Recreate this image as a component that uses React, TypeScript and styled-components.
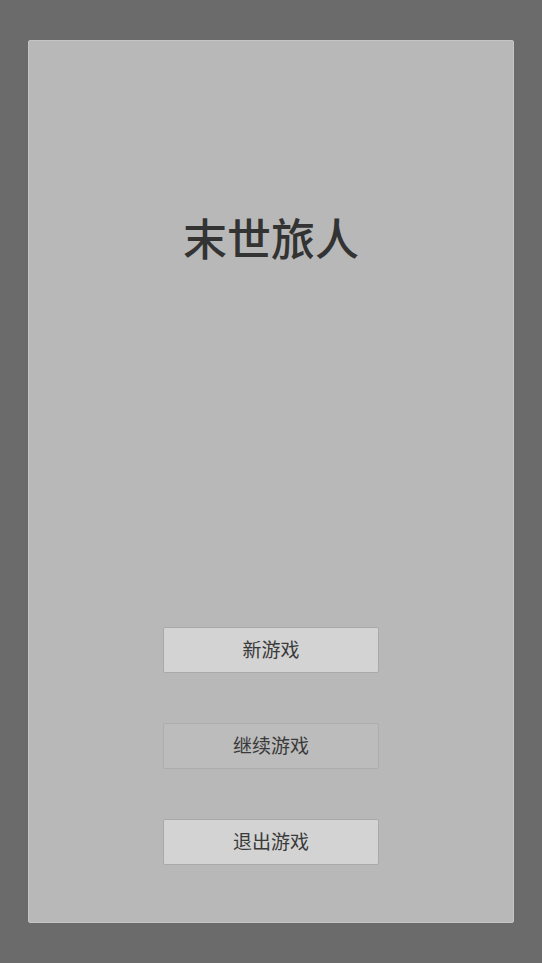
import styled, { createGlobalStyle } from "styled-components";

const GlobalStyle = createGlobalStyle`
  html, body {
    margin: 0;
    padding: 0;
    height: 100%;
    background: #6b6b6b;
  }
  #root {
    height: 100%;
  }
`;

const Screen = styled.div`
  box-sizing: border-box;
  height: 963px;
  padding: 40px 28px;
  background: #6b6b6b;
  font-family: "Noto Sans CJK SC", "Noto Sans", sans-serif;
`;

const Panel = styled.div`
  box-sizing: border-box;
  height: 100%;
  display: flex;
  flex-direction: column;
  align-items: center;
  background: #b8b8b8;
  border: 1px solid #c4c4c4;
  border-radius: 2px;
`;

const Title = styled.h1`
  margin: 164px 0 0;
  font-size: 44px;
  line-height: 64px;
  font-weight: 500;
  color: #333333;
`;

const Menu = styled.div`
  margin-top: auto;
  padding-bottom: 57px;
  display: flex;
  flex-direction: column;
  gap: 50px;
`;

const MenuButton = styled.button<{ $muted?: boolean }>`
  box-sizing: border-box;
  width: 216px;
  height: 46px;
  padding: 0 0 3px;
  border: 1px solid ${(p) => (p.$muted ? "#adadad" : "#a9a9a9")};
  border-radius: 2px;
  background: ${(p) => (p.$muted ? "#bcbcbc" : "#d3d3d3")};
  color: #3a3a3a;
  font-family: inherit;
  font-size: 19px;
  line-height: 41px;
  cursor: pointer;
`;

export default function App() {
  return (
    <>
      <GlobalStyle />
      <Screen>
        <Panel>
          <Title>末世旅人</Title>
          <Menu>
            <MenuButton>新游戏</MenuButton>
            <MenuButton $muted>继续游戏</MenuButton>
            <MenuButton>退出游戏</MenuButton>
          </Menu>
        </Panel>
      </Screen>
    </>
  );
}
